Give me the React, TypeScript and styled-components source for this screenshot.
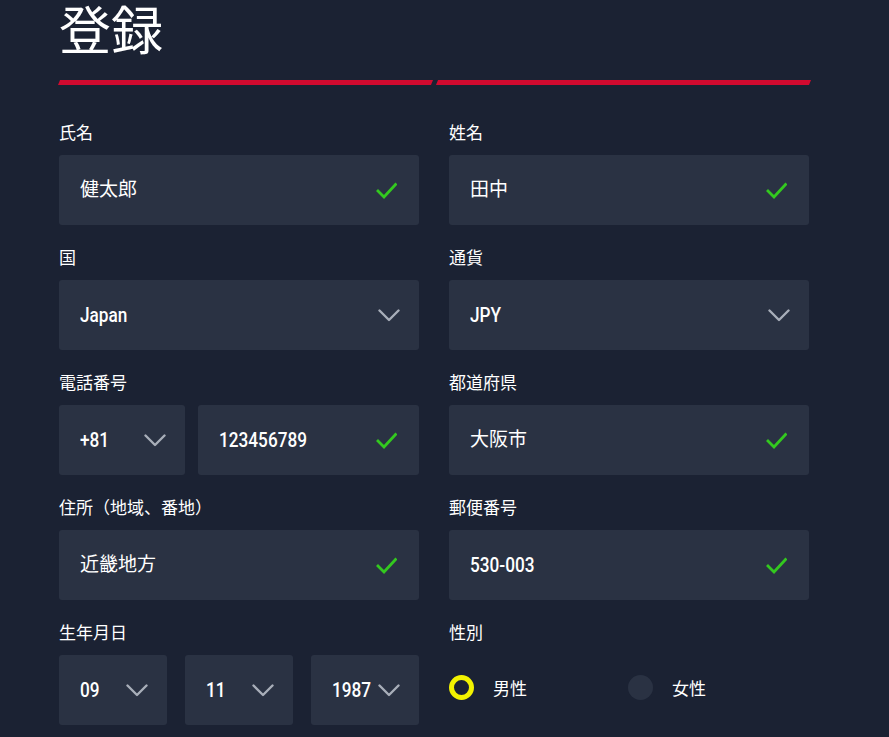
import React from "react";
import styled, { createGlobalStyle } from "styled-components";

const GlobalStyle = createGlobalStyle`
  html, body {
    margin: 0;
    padding: 0;
    background: #1b2233;
  }
  body {
    font-family: "Noto Sans CJK JP", "Noto Sans", sans-serif;
    color: #ffffff;
  }
  * { box-sizing: border-box; }
`;

const Page = styled.div`
  width: 889px;
  min-height: 737px;
  background: #1b2233;
  padding: 0 0 0 59px;
  overflow: hidden;
`;

const Form = styled.div`
  width: 751px;
`;

const Title = styled.h1`
  margin: 0;
  font-size: 52px;
  line-height: 56px;
  font-weight: 400;
  color: #ffffff;
`;

const Progress = styled.div`
  display: flex;
  gap: 5px;
  margin-top: 24px;
  height: 5px;
`;

const Step = styled.div<{ $active?: boolean }>`
  flex: 1;
  height: 5px;
  background: ${(p) => (p.$active ? "#d10a2f" : "#2a3243")};
  transform: skewX(-22deg);
`;

const Grid = styled.div`
  display: grid;
  grid-template-columns: 360px 360px;
  column-gap: 30px;
  row-gap: 22px;
  margin-top: 37px;
`;

const Field = styled.div`
  display: flex;
  flex-direction: column;
`;

const Label = styled.label`
  font-size: 17px;
  line-height: 20px;
  height: 20px;
  margin-bottom: 13px;
  color: #ffffff;
`;

const Box = styled.div`
  height: 70px;
  background: #2a3243;
  border-radius: 3px;
  display: flex;
  align-items: center;
  justify-content: space-between;
  padding: 0 19px 0 21px;
`;

/* Latin values emulate a condensed face by narrowing Roboto horizontally */
const Value = styled.span<{ $latin?: boolean }>`
  display: inline-block;
  white-space: nowrap;
  font-family: ${(p) =>
    p.$latin
      ? `"Roboto", "Noto Sans", sans-serif`
      : `"Noto Sans CJK JP", "Noto Sans", sans-serif`};
  font-size: ${(p) => (p.$latin ? "20px" : "19px")};
  font-weight: ${(p) => (p.$latin ? 500 : 400)};
  line-height: 24px;
  margin-bottom: ${(p) => (p.$latin ? "0" : "4px")};
  transform: ${(p) => (p.$latin ? "scaleX(0.86)" : "none")};
  transform-origin: left center;
  color: #ffffff;
`;

const Split = styled.div<{ $cols: string; $gap: number }>`
  display: grid;
  grid-template-columns: ${(p) => p.$cols};
  gap: ${(p) => p.$gap}px;
`;

const Radios = styled.div`
  height: 70px;
  display: flex;
  align-items: center;
  padding-bottom: 6px;
`;

const RadioOption = styled.div`
  width: 179px;
  display: flex;
  align-items: center;
  gap: 19px;
`;

const RadioDot = styled.span<{ $checked?: boolean }>`
  width: 25px;
  height: 25px;
  border-radius: 50%;
  flex: none;
  background: ${(p) => (p.$checked ? "#1b2233" : "#2a3243")};
  border: ${(p) => (p.$checked ? "5px solid #f2f200" : "none")};
`;

const RadioText = styled.span`
  font-size: 17px;
  color: #ffffff;
`;

const IconWrap = styled.span<{ $inset?: number }>`
  display: flex;
  align-items: center;
  flex: none;
  margin-right: ${(p) => p.$inset ?? 0}px;
`;

const Check = () => (
  <IconWrap $inset={3}>
    <svg width="21" height="17" viewBox="0 0 21 17" fill="none">
      <path
        d="M2 9 L8 15 L19.5 2.5"
        stroke="#33c81f"
        strokeWidth="2.8"
        strokeLinecap="square"
        strokeLinejoin="miter"
      />
    </svg>
  </IconWrap>
);

const Chevron = () => (
  <IconWrap>
    <svg width="22" height="13" viewBox="0 0 22 13" fill="none">
      <path
        d="M1.5 1.5 L11 11 L20.5 1.5"
        stroke="#a8aeb9"
        strokeWidth="2.4"
        strokeLinecap="round"
        strokeLinejoin="round"
      />
    </svg>
  </IconWrap>
);

type BoxProps = { value: string; latin?: boolean; kind: "check" | "select" };

const InputBox = ({ value, latin, kind }: BoxProps) => (
  <Box>
    <Value $latin={latin}>{value}</Value>
    {kind === "check" ? <Check /> : <Chevron />}
  </Box>
);

export default function App() {
  return (
    <Page>
      <GlobalStyle />
      <Form>
        <Title>登録</Title>
        <Progress>
          <Step $active />
          <Step $active />
        </Progress>
        <Grid>
          <Field>
            <Label>氏名</Label>
            <InputBox value="健太郎" kind="check" />
          </Field>
          <Field>
            <Label>姓名</Label>
            <InputBox value="田中" kind="check" />
          </Field>

          <Field>
            <Label>国</Label>
            <InputBox value="Japan" latin kind="select" />
          </Field>
          <Field>
            <Label>通貨</Label>
            <InputBox value="JPY" latin kind="select" />
          </Field>

          <Field>
            <Label>電話番号</Label>
            <Split $cols="126px 1fr" $gap={13}>
              <InputBox value="+81" latin kind="select" />
              <InputBox value="123456789" latin kind="check" />
            </Split>
          </Field>
          <Field>
            <Label>都道府県</Label>
            <InputBox value="大阪市" kind="check" />
          </Field>

          <Field>
            <Label>住所（地域、番地）</Label>
            <InputBox value="近畿地方" kind="check" />
          </Field>
          <Field>
            <Label>郵便番号</Label>
            <InputBox value="530-003" latin kind="check" />
          </Field>

          <Field>
            <Label>生年月日</Label>
            <Split $cols="1fr 1fr 1fr" $gap={18}>
              <InputBox value="09" latin kind="select" />
              <InputBox value="11" latin kind="select" />
              <InputBox value="1987" latin kind="select" />
            </Split>
          </Field>
          <Field>
            <Label>性別</Label>
            <Radios>
              <RadioOption>
                <RadioDot $checked />
                <RadioText>男性</RadioText>
              </RadioOption>
              <RadioOption>
                <RadioDot />
                <RadioText>女性</RadioText>
              </RadioOption>
            </Radios>
          </Field>
        </Grid>
      </Form>
    </Page>
  );
}
